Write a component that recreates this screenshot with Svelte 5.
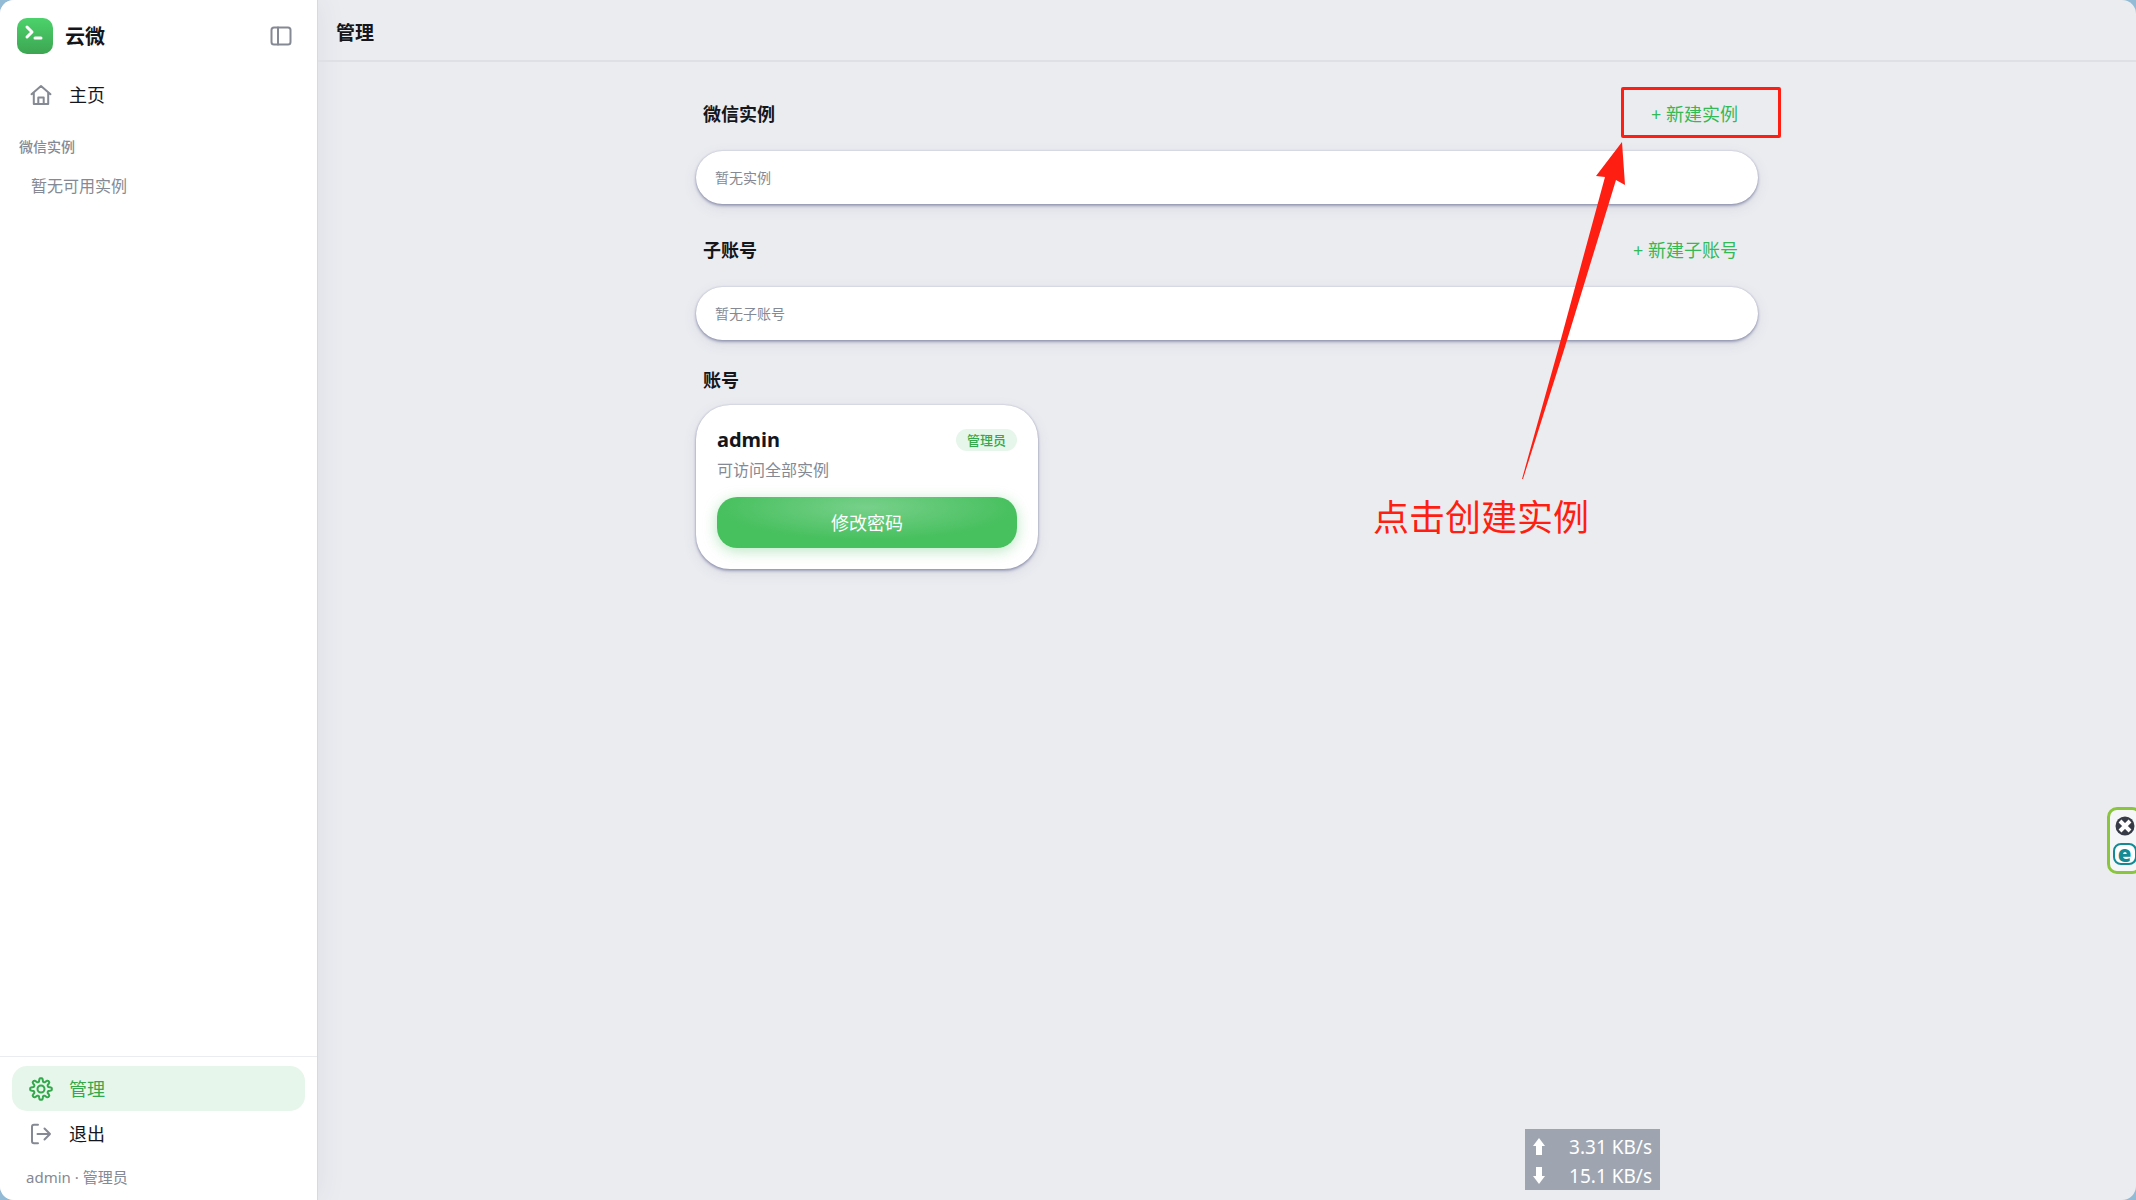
<script>
  const nav = [{ label: '主页', icon: 'home' }];
  const footerNav = [
    { label: '管理', icon: 'gear', active: true },
    { label: '退出', icon: 'exit' }
  ];
  const sections = [
    { title: '微信实例', action: '+ 新建实例', empty: '暂无实例' },
    { title: '子账号', action: '+ 新建子账号', empty: '暂无子账号' }
  ];

  // Eight-lobed outline, sampled round the centre of a 24-unit box.
  const lobes = Array.from({ length: 96 }, (_, i) => {
    const a = (i / 96) * Math.PI * 2;
    const r = 9.1 + 1.8 * Math.tanh(2 * Math.cos(8 * a));
    return `${(12 + r * Math.sin(a)).toFixed(2)},${(12 - r * Math.cos(a)).toFixed(2)}`;
  }).join(' ');
</script>

{#snippet icon(name)}
  <svg class="icon" viewBox="0 0 24 24" aria-hidden="true">
    {#if name === 'home'}
      <path d="M2.5 11.2 12 3l9.500 8.200M4.800 9.500V21h14.400V9.500M9.300 21v-6.500h5.400V21" />
    {:else if name === 'gear'}
      <polygon points={lobes} />
      <circle cx="12" cy="12" r="3.500" />
    {:else if name === 'exit'}
      <path d="M9 2.800H5a2 2 0 0 0-2 2v14.400a2 2 0 0 0 2 2h4M8.500 12h12.500M15.500 6.500 21 12l-5.500 5.500" />
    {:else}
      <rect x="2.500" y="3.500" width="19" height="17" rx="2.500" />
      <path d="M9 3.500v17" />
    {/if}
  </svg>
{/snippet}

{#snippet navItem(item)}
  <a class="nav-item" class:active={item.active} href="#{item.icon}">
    {@render icon(item.icon)}
    <span>{item.label}</span>
  </a>
{/snippet}

<div class="window">
  <aside>
    <div class="brand">
      <svg class="logo" viewBox="0 0 36 36" aria-hidden="true">
        <defs>
          <linearGradient id="logo-fill" x1="0" y1="0" x2="0" y2="1">
            <stop offset="0" stop-color="#4cd26b" />
            <stop offset="1" stop-color="#3da552" />
          </linearGradient>
        </defs>
        <rect width="36" height="36" rx="10" fill="url(#logo-fill)" />
        <path d="m10 9 5 5-5 5M18 20h6" />
      </svg>
      <strong>云微</strong>
      <button class="toggle" aria-label="切换侧栏">{@render icon('panel')}</button>
    </div>
    <nav>
      {#each nav as item}{@render navItem(item)}{/each}
      <h2>微信实例</h2>
      <p>暂无可用实例</p>
    </nav>
    <footer>
      {#each footerNav as item}{@render navItem(item)}{/each}
      <div class="whoami">admin · 管理员</div>
    </footer>
  </aside>

  <main>
    <header><h1>管理</h1></header>
    <div class="content">
      {#each sections as s}
        <section>
          <div class="head">
            <h3>{s.title}</h3>
            <button class="add">{s.action}</button>
          </div>
          <div class="card empty">{s.empty}</div>
        </section>
      {/each}
      <section>
        <div class="head compact"><h3>账号</h3></div>
        <div class="card account">
          <div class="row">
            <strong>admin</strong>
            <span class="badge">管理员</span>
          </div>
          <p>可访问全部实例</p>
          <button class="primary">修改密码</button>
        </div>
      </section>

      <div class="mark-box"></div>
      <svg class="mark-arrow" viewBox="0 0 106 340" aria-hidden="true">
        <path d="M101 2 75 36l9 1L37 210 1 339h1L43 210 95 40l9 5z" />
      </svg>
      <div class="mark-text">点击创建实例</div>
    </div>
  </main>

  <div class="speed">
    <svg viewBox="0 0 12 18" aria-hidden="true"><path d="M6 0 12 8H9v9H3V8H0z" /></svg>
    <span>3.31 KB/s</span>
    <svg viewBox="0 0 12 18" aria-hidden="true"><path d="M6 17 12 9H9V0H3v9H0z" /></svg>
    <span>15.1 KB/s</span>
  </div>

  <div class="dock">
    <svg viewBox="0 0 20 20" aria-hidden="true">
      <circle cx="10" cy="10" r="9.500" fill="#363b45" />
      <path d="m5 5 10 10m0-10-10 10" stroke="#fff" stroke-width="4" />
    </svg>
    <span>e</span>
  </div>
</div>

<style>
  :global(body) {
    margin: 0;
    background: #94bbd6;
  }
  .window {
    position: relative;
    display: flex;
    box-sizing: border-box;
    min-height: 100vh;
    overflow: hidden;
    border-radius: 14px;
    background: #ebecf0;
    color: #14161c;
    font: 18px/24px 'Noto Sans', 'Noto Sans CJK SC', sans-serif;
  }
  h1, h2, h3, p { margin: 0; }
  button {
    border: 0;
    padding: 0;
    background: none;
    color: inherit;
    font: inherit;
    cursor: pointer;
  }
  .icon {
    width: 24px;
    height: 24px;
    fill: none;
    stroke: #858993;
    stroke-width: 2;
    stroke-linejoin: round;
    stroke-linecap: round;
  }
  aside {
    display: flex;
    flex: 0 0 317px;
    flex-direction: column;
    background: #fff;
    border-right: 1px solid #d8d9df;
    box-shadow: 0 0 28px rgba(60, 60, 100, 0.08);
  }
  .brand {
    display: flex;
    align-items: center;
    gap: 12px;
    padding: 18px 18px 0 17px;
  }
  .logo { width: 36px; height: 36px; }
  .logo path {
    fill: none;
    stroke: #fff;
    stroke-width: 3;
    stroke-linecap: round;
    stroke-linejoin: round;
  }
  .brand strong { padding-top: 2px; font-size: 20px; }
  .toggle {
    display: grid;
    place-items: center;
    width: 36px;
    height: 36px;
    margin-left: auto;
  }
  nav { flex: 1; padding: 18px 12px; }
  .nav-item {
    display: flex;
    align-items: center;
    gap: 16px;
    height: 45px;
    padding: 0 17px;
    border-radius: 15px;
    color: inherit;
    text-decoration: none;
  }
  .nav-item.active { background: #e6f6ea; color: #34a84d; }
  .active .icon { stroke: #34a84d; }
  nav h2 {
    padding: 18px 7px 0;
    color: #858993;
    font-size: 14px;
    font-weight: 500;
  }
  nav p {
    padding: 15px 19px;
    color: #858993;
    font-size: 16px;
  }
  footer {
    padding: 9px 12px 11px;
    border-top: 1px solid #ebecf0;
  }
  .whoami {
    padding: 9px 14px 0;
    color: #858993;
    font-size: 15px;
  }
  main { flex: 1; min-width: 0; }
  header {
    display: flex;
    align-items: center;
    box-sizing: border-box;
    height: 62px;
    padding: 5px 18px 0;
    border-bottom: 2px solid #dfe0e5;
  }
  h1 { font-size: 19px; }
  .content {
    position: relative;
    max-width: 1062px;
    margin: 0 auto;
    padding-top: 29px;
  }
  .head {
    display: flex;
    align-items: center;
    justify-content: space-between;
    height: 45px;
    padding: 0 20px 15px 7px;
  }
  .head.compact { height: 34px; padding-bottom: 8px; }
  h3 { font-size: 18px; }
  .add { height: 44px; color: #34b954; }
  .card {
    background: #fff;
    box-shadow: 0 2px 3px rgba(70, 75, 125, 0.45), 0 0 2px rgba(70, 75, 125, 0.3), 0 4px 14px rgba(70, 75, 125, 0.1);
  }
  .empty {
    margin-bottom: 23px;
    padding: 15px 19px 14px;
    border-radius: 27px;
    color: #858993;
    font-size: 14px;
  }
  .account {
    box-sizing: border-box;
    width: 342px;
    padding: 23px 21px 21px;
    border-radius: 34px;
  }
  .row {
    display: flex;
    align-items: center;
    justify-content: space-between;
  }
  .row strong { font-size: 20px; }
  .badge {
    padding: 0 11px;
    border-radius: 11px;
    background: #e6f6ea;
    color: #34a84d;
    font-size: 13px;
    font-weight: 500;
    line-height: 22px;
  }
  .account p {
    margin: 6px 0 15px;
    color: #858993;
    font-size: 16px;
  }
  .primary {
    width: 100%;
    height: 51px;
    border-radius: 20px;
    background: radial-gradient(ellipse 50% 65% at 50% 20%, #77d08a, #47c05e);
    box-shadow: 0 3px 14px rgba(71, 192, 94, 0.38);
    color: #fff;
  }
  .mark-box {
    position: absolute;
    top: 25px;
    right: -23px;
    box-sizing: border-box;
    width: 160px;
    height: 51px;
    border: 3px solid #ff1e12;
    border-radius: 2px;
    pointer-events: none;
  }
  .mark-arrow {
    position: absolute;
    top: 78px;
    right: 131px;
    width: 106px;
    height: 340px;
    fill: #ff1e12;
    pointer-events: none;
  }
  .mark-text {
    position: absolute;
    top: 432px;
    right: 169px;
    color: #ff1e12;
    font-size: 36px;
    line-height: 48px;
  }
  .speed {
    position: absolute;
    right: 476px;
    bottom: 10px;
    display: grid;
    grid-template-columns: 12px 1fr;
    align-items: center;
    box-sizing: border-box;
    width: 135px;
    height: 61px;
    padding: 4px 8px 0;
    background: #9ea5b1;
    color: #fff;
    font-size: 19px;
    text-align: right;
  }
  .speed svg { width: 12px; height: 18px; fill: #fff; }
  .dock {
    position: absolute;
    right: -6px;
    top: 807px;
    display: flex;
    flex-direction: column;
    align-items: center;
    gap: 7px;
    box-sizing: border-box;
    width: 35px;
    height: 67px;
    padding: 6px 0;
    border: 3px solid #8ac53e;
    border-radius: 10px;
    background: #f5f6f8;
  }
  .dock svg { flex: none; width: 20px; height: 20px; }
  .dock span {
    box-sizing: border-box;
    width: 24px;
    height: 24px;
    border: 2px solid #138a94;
    border-radius: 8px;
    background: #fff;
    color: #138a94;
    font: 900 22px/17px 'Open Sans', sans-serif;
    text-align: center;
  }
</style>
